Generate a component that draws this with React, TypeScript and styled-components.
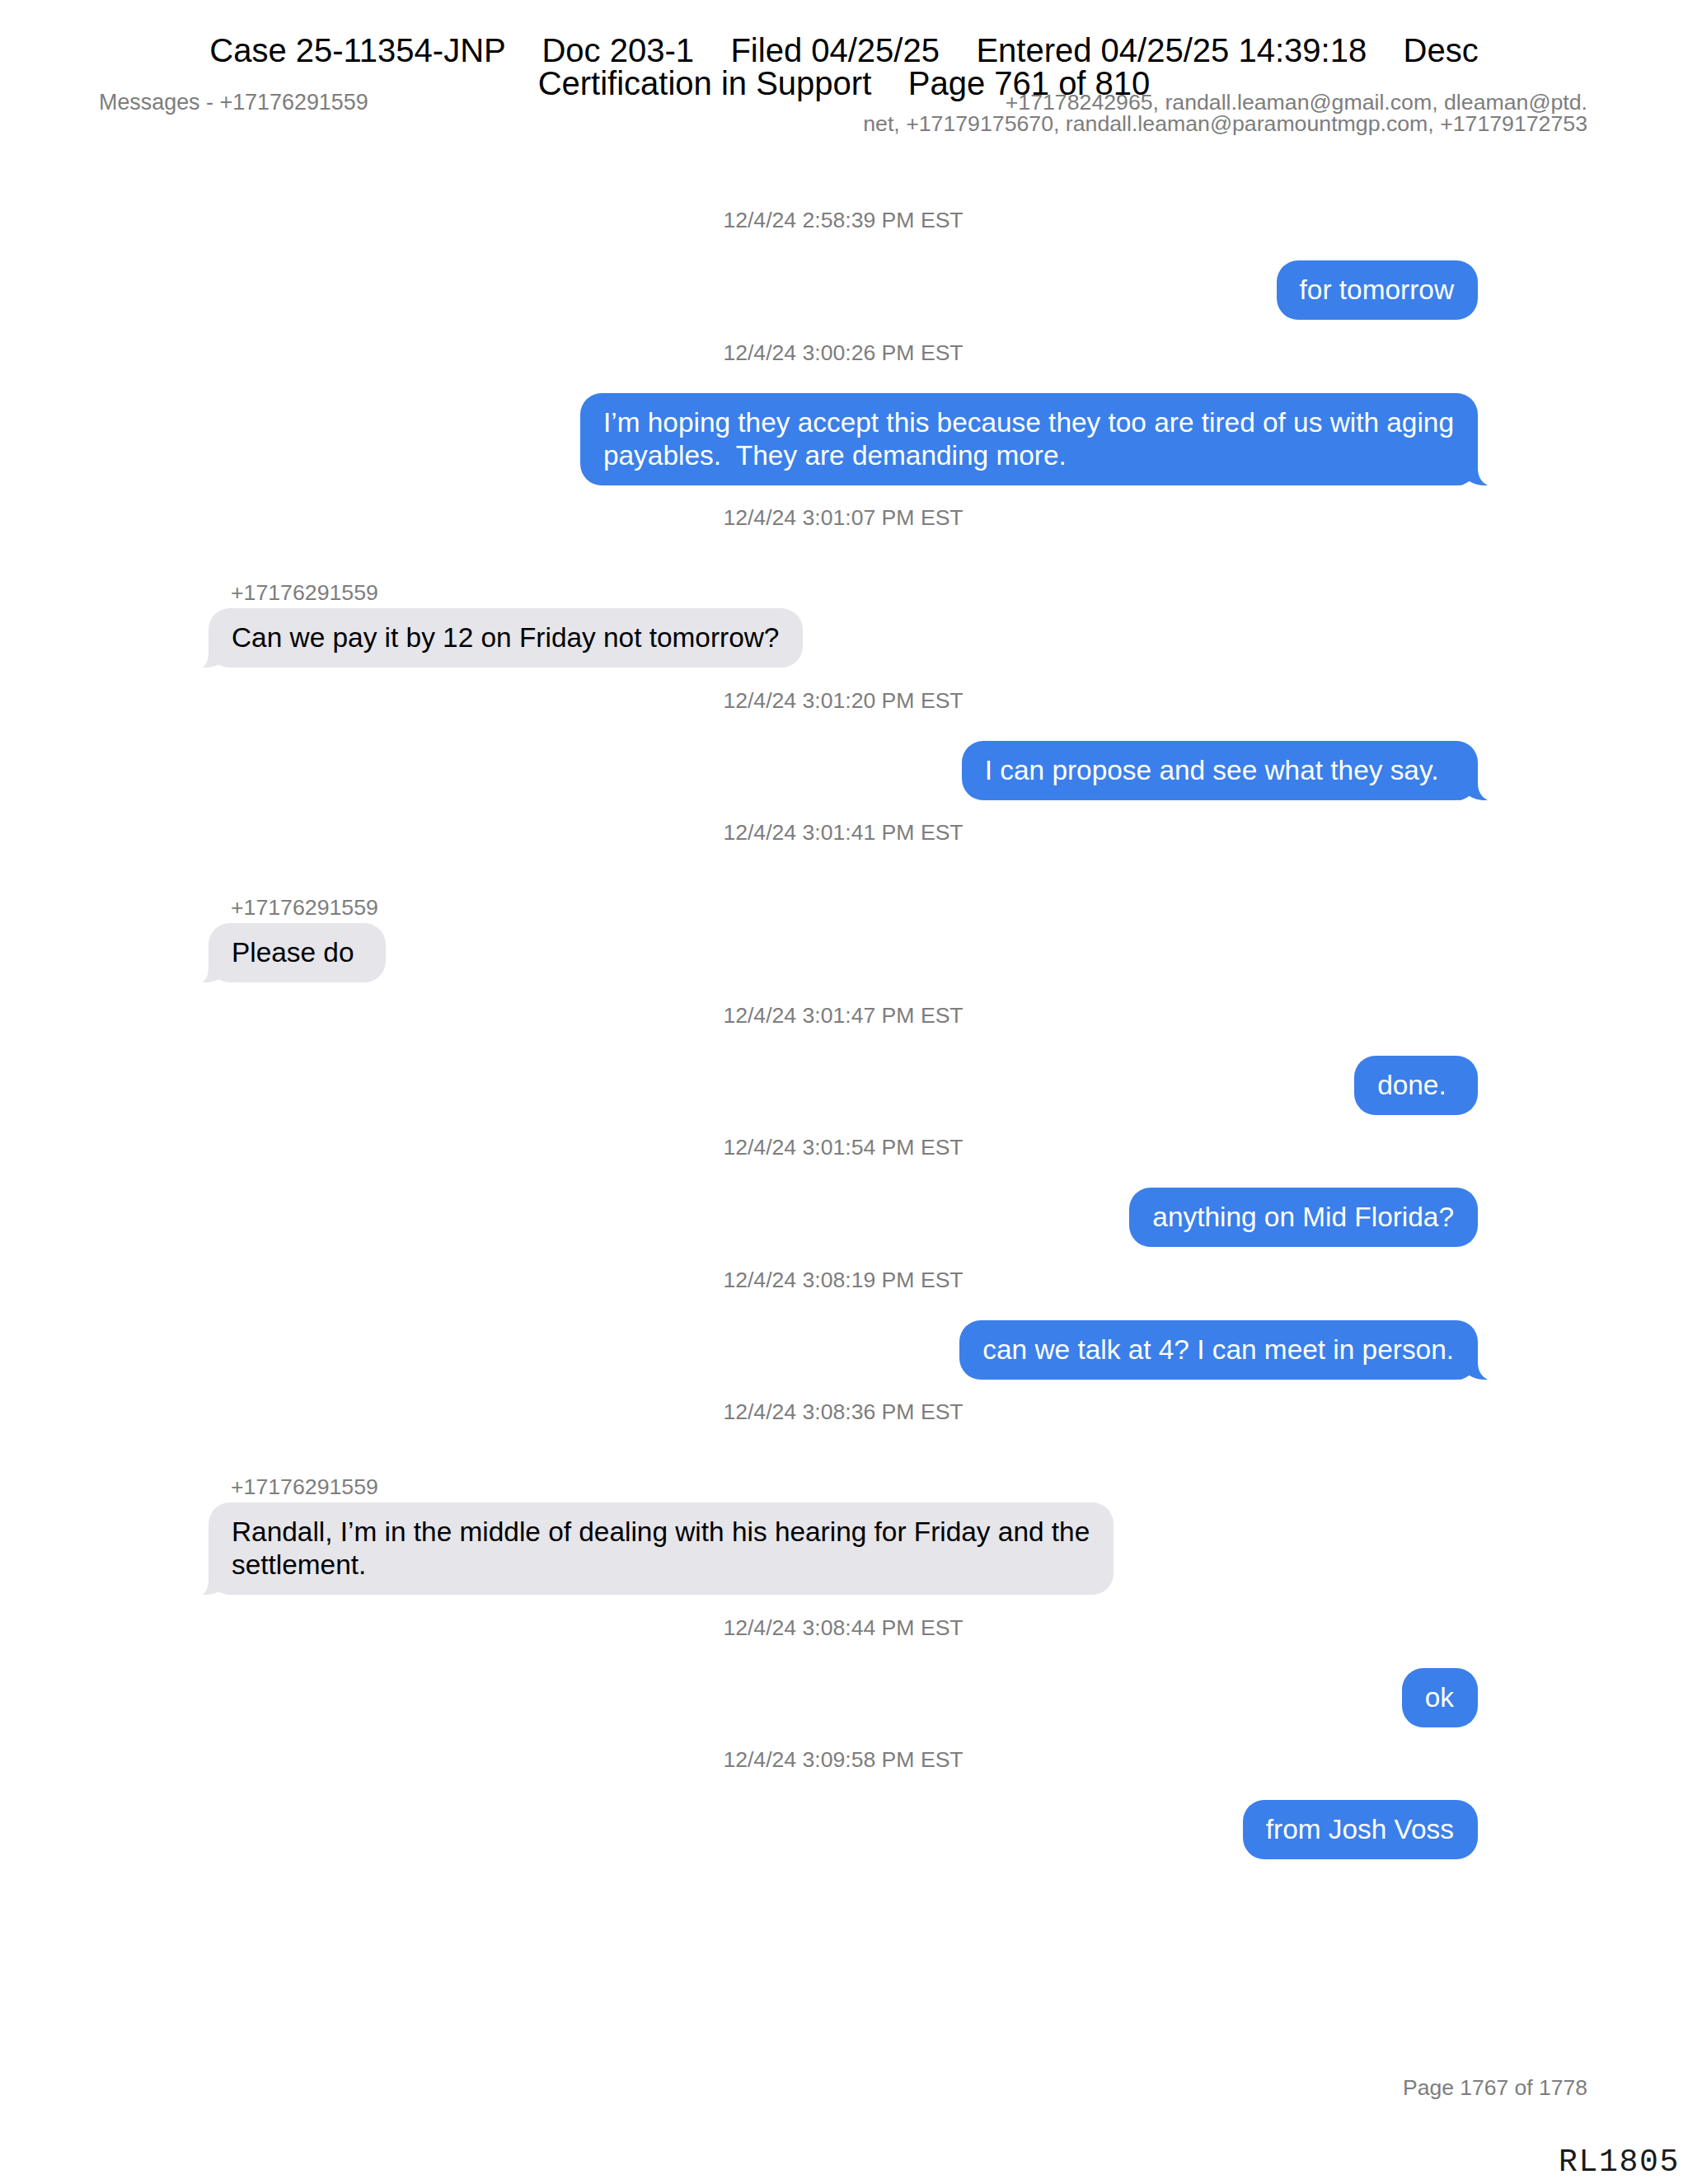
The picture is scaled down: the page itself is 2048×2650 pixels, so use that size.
import React from "react";
import styled, { createGlobalStyle } from "styled-components";

const GlobalStyle = createGlobalStyle`
  html, body {
    margin: 0;
    padding: 0;
    background: #ffffff;
  }
  body {
    font-family: "Liberation Sans", Arial, sans-serif;
  }
`;

const GRAY = "#7d7d7d";
const BLUE = "#3b7fea";
const BUBBLE_GRAY = "#e5e5ea";

const Page = styled.div`
  position: relative;
  width: 2048px;
  height: 2650px;
  display: flex;
  flex-direction: column;
  background: #ffffff;
  overflow: hidden;
`;

// court filing stamp printed over the export header
const CourtStamp = styled.div`
  position: absolute;
  top: 41px;
  left: 0;
  right: 0;
  text-align: center;
  font-size: 40px;
  line-height: 40px;
  color: #000000;
  white-space: pre;
`;

const Header = styled.header`
  display: flex;
  justify-content: space-between;
  align-items: flex-start;
  padding: 111px 122px 0 120px;
  font-size: 26.9px;
  line-height: 26px;
  color: ${GRAY};
`;

const Recipients = styled.div`
  text-align: right;
  font-size: 26.7px;
`;

const Thread = styled.main`
  display: flex;
  flex-direction: column;
  padding: 89px 255px 0 253px;
`;

const Group = styled.section`
  display: flex;
  flex-direction: column;
  margin-bottom: 24.5px;
`;

const Timestamp = styled.div`
  text-align: center;
  font-size: 26.6px;
  line-height: 30px;
  color: ${GRAY};
  margin-bottom: 34px;
`;

const Sender = styled.div`
  font-size: 26.7px;
  line-height: 30px;
  color: ${GRAY};
  margin: 27px 0 4px 27px;
`;

const Row = styled.div<{ $sent: boolean }>`
  display: flex;
  justify-content: ${(p) => (p.$sent ? "flex-end" : "flex-start")};
`;

const Bubble = styled.div<{ $sent: boolean }>`
  position: relative;
  padding: 16px 29px 16px 28px;
  border-radius: 26px;
  font-size: 33.4px;
  line-height: 40px;
  white-space: pre;
  background: ${(p) => (p.$sent ? BLUE : BUBBLE_GRAY)};
  color: ${(p) => (p.$sent ? "#ffffff" : "#000000")};
`;

const TailSvg = styled.svg<{ $sent: boolean }>`
  position: absolute;
  bottom: 0;
  width: 35px;
  height: 25px;
  ${(p) => (p.$sent ? "right: -12px;" : "left: -7px;")}
`;

const Footer = styled.footer`
  margin-top: auto;
  display: flex;
  flex-direction: column;
  align-items: flex-end;
`;

const PageNumber = styled.div`
  font-size: 26.5px;
  line-height: 30px;
  color: ${GRAY};
  margin: 0 122px 56px 0;
`;

const Bates = styled.div`
  font-family: "Liberation Mono", "Courier New", monospace;
  font-size: 38px;
  line-height: 40px;
  letter-spacing: 1.7px;
  color: #1a1a1a;
  margin: 0 10px 6px 0;
`;

function Tail({ sent }: { sent: boolean }) {
  const d = sent
    ? "M0 0 H23 V4 C23 14 27 21 35 25 C28 25.5 19 24 12 19.5 C8 22.5 4 25 0 25 Z"
    : "M35 0 H7 V5 C7 14 5 21 0 25 C6 25.5 15 24 22 20 C26 23 31 25 35 25 Z";
  return (
    <TailSvg $sent={sent} viewBox="0 0 35 25">
      <path d={d} fill={sent ? BLUE : BUBBLE_GRAY} />
    </TailSvg>
  );
}

type Message = {
  time: string;
  text: string;
  sent: boolean;
  from?: string;
  tail?: boolean;
};

const PHONE = "+17176291559";

const messages: Message[] = [
  { time: "12/4/24 2:58:39 PM EST", text: "for tomorrow", sent: true },
  {
    time: "12/4/24 3:00:26 PM EST",
    text: "I\u2019m hoping they accept this because they too are tired of us with aging\npayables.  They are demanding more.",
    sent: true,
    tail: true,
  },
  {
    time: "12/4/24 3:01:07 PM EST",
    text: "Can we pay it by 12 on Friday not tomorrow?",
    sent: false,
    from: PHONE,
    tail: true,
  },
  { time: "12/4/24 3:01:20 PM EST", text: "I can propose and see what they say.  ", sent: true, tail: true },
  { time: "12/4/24 3:01:41 PM EST", text: "Please do ", sent: false, from: PHONE, tail: true },
  { time: "12/4/24 3:01:47 PM EST", text: "done. ", sent: true },
  { time: "12/4/24 3:01:54 PM EST", text: "anything on Mid Florida?", sent: true },
  { time: "12/4/24 3:08:19 PM EST", text: "can we talk at 4? I can meet in person.", sent: true, tail: true },
  {
    time: "12/4/24 3:08:36 PM EST",
    text: "Randall, I\u2019m in the middle of dealing with his hearing for Friday and the\nsettlement.",
    sent: false,
    from: PHONE,
    tail: true,
  },
  { time: "12/4/24 3:08:44 PM EST", text: "ok", sent: true },
  { time: "12/4/24 3:09:58 PM EST", text: "from Josh Voss", sent: true },
];

export default function App() {
  return (
    <>
      <GlobalStyle />
      <Page>
        <CourtStamp>
          <div>{"Case 25-11354-JNP    Doc 203-1    Filed 04/25/25    Entered 04/25/25 14:39:18    Desc"}</div>
          <div>{"Certification in Support    Page 761 of 810"}</div>
        </CourtStamp>

        <Header>
          <div>Messages - +17176291559</div>
          <Recipients>
            <div>+17178242965, randall.leaman@gmail.com, dleaman@ptd.</div>
            <div>net, +17179175670, randall.leaman@paramountmgp.com, +17179172753</div>
          </Recipients>
        </Header>

        <Thread>
          {messages.map((m, i) => (
            <Group key={i}>
              <Timestamp>{m.time}</Timestamp>
              {m.from && <Sender>{m.from}</Sender>}
              <Row $sent={m.sent}>
                <Bubble $sent={m.sent}>
                  {m.text}
                  {m.tail && <Tail sent={m.sent} />}
                </Bubble>
              </Row>
            </Group>
          ))}
        </Thread>

        <Footer>
          <PageNumber>Page 1767 of 1778</PageNumber>
          <Bates>RL1805</Bates>
        </Footer>
      </Page>
    </>
  );
}
